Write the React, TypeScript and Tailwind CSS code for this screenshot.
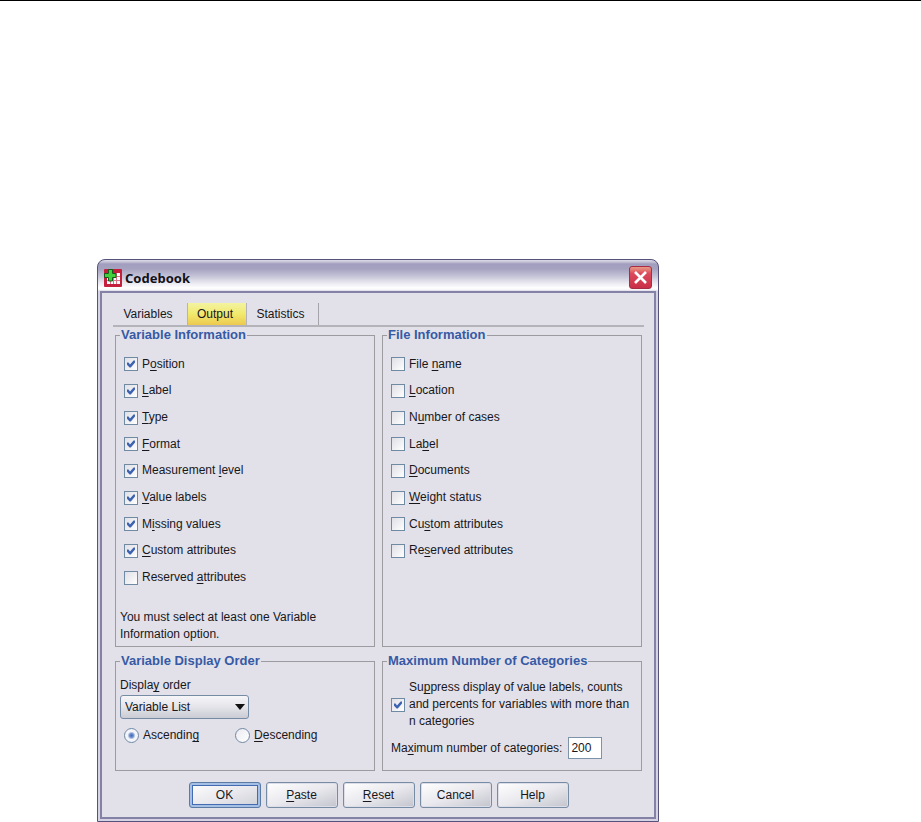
import type { ReactNode } from 'react';

const variableInfo = [
  { label: 'P&osition', checked: true },
  { label: '&Label', checked: true },
  { label: '&Type', checked: true },
  { label: '&Format', checked: true },
  { label: 'Measurement &level', checked: true },
  { label: '&Value labels', checked: true },
  { label: 'M&issing values', checked: true },
  { label: '&Custom attributes', checked: true },
  { label: 'Reserved &attributes', checked: false },
];

const fileInfo = [
  'File &name',
  '&Location',
  'N&umber of cases',
  'La&bel',
  '&Documents',
  '&Weight status',
  'Cu&stom attributes',
  'Re&served attributes',
];

// "&" marks the access key, the letter after it is underlined
const Mnemonic = ({ text }: { text: string }) => {
  const at = text.indexOf('&');
  if (at < 0) return <>{text}</>;
  return (
    <span>
      {text.slice(0, at)}
      <u className="underline-offset-2">{text[at + 1]}</u>
      {text.slice(at + 2)}
    </span>
  );
};

const Checkbox = ({ label, checked }: { label: string; checked?: boolean }) => (
  <label className="flex items-center gap-1">
    <span className="grid shrink-0">
      <input
        type="checkbox"
        defaultChecked={checked}
        className="peer col-start-1 row-start-1 size-3.5 appearance-none border border-[#6f8ba3] bg-linear-to-br from-[#dfdfe6] to-white"
      />
      <svg
        viewBox="0 0 14 14"
        className="pointer-events-none invisible col-start-1 row-start-1 size-3.5 peer-checked:visible"
      >
        <path
          d="M3 5.500 L4.500 5.500 L6 7.600 L9.600 3.500 L11 3.500 V5.500 L6.800 10.500 L5.600 10.500 L3 7.800z"
          fill="#3c62b0"
        />
      </svg>
    </span>
    <Mnemonic text={label} />
  </label>
);

const Radio = ({ label, checked }: { label: string; checked?: boolean }) => (
  <label className="flex items-center gap-1">
    <input
      type="radio"
      name="direction"
      defaultChecked={checked}
      className="size-[15px] appearance-none rounded-full border border-[#7089a3] bg-linear-to-br from-[#ececf1] to-white checked:bg-[radial-gradient(circle,#3f68b8_0,#6f90cc_2px,#f4f5fa_4px)]"
    />
    <Mnemonic text={label} />
  </label>
);

const Group = ({ title, children }: { title: string; children: ReactNode }) => (
  <fieldset className="min-w-0 border border-[#9c9ba0] px-1">
    <legend className="h-4 px-px text-[13px] leading-4 font-bold text-[#365aa5]">
      {title}
    </legend>
    {children}
  </fieldset>
);

const DialogButton = ({
  label,
  primary,
}: {
  label: string;
  primary?: boolean;
}) => (
  <button
    type="button"
    className={
      primary
        ? 'h-[26px] w-[72px] rounded-[3px] border border-[#5a7ba6] bg-linear-to-br from-white via-[#e9e9ee] to-[#cfcfd8] shadow-[inset_0_0_0_2px_#a5c0e4,inset_0_0_0_3px_#426bb2]'
        : 'h-[26px] w-[72px] rounded-[3px] border border-[#768ca5] bg-linear-to-br from-white via-[#e9e9ee] to-[#c4c4ce] shadow-[inset_0_0_0_1px_#dcdde6]'
    }
  >
    <Mnemonic text={label} />
  </button>
);

const CodebookIcon = () => (
  <svg viewBox="0 0 18 18" className="size-[18px]">
    <rect width="18" height="18" rx="1" fill="#c41f3c" />
    <path d="M3 4h13v11H3z" fill="#fff" />
    <path
      d="M3 7.500h13 M3 11.500h13 M6.500 4v11 M9.500 4v11 M12.500 4v11"
      stroke="#dc7486"
    />
    <path
      d="M4.500 .5h4v4H12v4H8.500V12h-4V8.500h-4v-4h4z"
      fill="#3fd03a"
      stroke="#145a1c"
    />
  </svg>
);

const TitleBar = () => (
  <header className="flex h-[31px] items-center justify-between px-1 pt-1">
    <div className="flex items-center gap-[3px]">
      <CodebookIcon />
      <h1 className="font-['Noto_Sans',sans-serif] text-[13px] leading-5 font-bold text-[#111118]">
        Codebook
      </h1>
    </div>
    <button
      type="button"
      aria-label="Close"
      className="flex size-[23px] items-center justify-center rounded-[3px] border border-[#a62d45] bg-linear-to-b from-[#e59a86] via-[#dc4a5c] via-30% to-[#c92f47]"
    >
      <svg viewBox="0 0 15 15" className="size-[15px]">
        <path
          d="M2 2 L13 13 M13 2 L2 13"
          stroke="#fff"
          strokeWidth="2.6"
        />
      </svg>
    </button>
  </header>
);

const Tabs = () => (
  <nav
    role="tablist"
    className="-mx-0.5 flex h-6 items-stretch border-b-2 border-[#b4b3b9]"
  >
    <button type="button" role="tab" className="w-[74px] pr-1">
      Variables
    </button>
    <button
      type="button"
      role="tab"
      aria-selected="true"
      className="w-[60px] border-x border-[#b4b3b9] bg-linear-to-b from-[#f3f3a0] via-[#f1ea6c] to-[#ecc94e] pr-1"
    >
      Output
    </button>
    <button
      type="button"
      role="tab"
      className="w-[72px] border-r border-[#a5a4aa] pr-1"
    >
      Statistics
    </button>
  </nav>
);

export default function App() {
  return (
    <div className="border-t border-black bg-white pt-[258px] pl-[97px] font-['Liberation_Sans',Arial,sans-serif] text-xs leading-[17px] text-[#17171c]">
      <div
        role="dialog"
        aria-label="Codebook"
        className="w-full max-w-[562px] rounded-t-lg border border-[#55537c] bg-[#d5d3e4] bg-[linear-gradient(to_bottom,#dddce8_0px,#c3c1d5_2px,#a19dbe_4px,#a6a3c1_9px,#c4c2d6_16px,#e5e4ed_22px,#ffffff_28px,#f4f4f8_30px,#d5d3e4_31px)] px-[2px] pb-[2px]"
      >
        <TitleBar />
        <main className="border-2 border-[#8381a5] bg-[#e2e1ea] pt-2.5 pr-3 pb-[9px] pl-[13px]">
          <Tabs />
          <div className="grid grid-cols-2 gap-x-[7px] gap-y-1.5">
            <Group title="Variable Information">
              <div className="mt-2 grid h-[240px] grid-rows-9 px-1">
                {variableInfo.map((item) => (
                  <Checkbox key={item.label} {...item} />
                ))}
              </div>
              <p className="max-w-[220px] pt-[18px] pb-[3px]">
                You must select at least one Variable Information option.
              </p>
            </Group>
            <Group title="File Information">
              <div className="mt-2 grid h-[240px] grid-rows-9 px-1">
                {fileInfo.map((label) => (
                  <Checkbox key={label} label={label} />
                ))}
              </div>
            </Group>
            <Group title="Variable Display Order">
              <div className="pt-2 pb-[26px]">
                <label htmlFor="display-order">
                  <Mnemonic text="Displa&y order" />
                </label>
                <div className="mt-px grid w-[129px] items-center">
                  <select
                    id="display-order"
                    className="col-start-1 row-start-1 h-6 appearance-none rounded-[3px] border border-[#768ca5] bg-linear-to-b from-[#f6f6f9] via-[#e4e4ea] to-[#cbcbd4] pl-1 leading-[17px]"
                  >
                    <option>Variable List</option>
                  </select>
                  <svg
                    viewBox="0 0 10 6"
                    className="pointer-events-none col-start-1 row-start-1 mr-1 h-1.5 w-2.5 justify-self-end"
                  >
                    <path d="M0 0h10L5 6z" fill="#111" />
                  </svg>
                </div>
                <div className="flex gap-9 px-1 pt-2">
                  <Radio label="Ascendin&g" checked />
                  <Radio label="&Descending" />
                </div>
              </div>
            </Group>
            <Group title="Maximum Number of Categories">
              <div className="pt-2.5 pl-1">
                <Checkbox
                  label="Su&ppress display of value labels, counts and percents for variables with more than n categories"
                  checked
                />
                <div className="flex items-center gap-1.5 pt-[7px]">
                  <label htmlFor="max-categories">
                    <Mnemonic text="Ma&ximum number of categories:" />
                  </label>
                  <input
                    id="max-categories"
                    type="text"
                    defaultValue="200"
                    className="h-[22px] w-[34px] border border-[#7c93aa] bg-white pl-0.5"
                  />
                </div>
              </div>
            </Group>
          </div>
          <footer className="flex justify-center gap-[5px] pt-[11px]">
            <DialogButton label="OK" primary />
            <DialogButton label="&Paste" />
            <DialogButton label="&Reset" />
            <DialogButton label="Cancel" />
            <DialogButton label="Help" />
          </footer>
        </main>
      </div>
    </div>
  );
}
